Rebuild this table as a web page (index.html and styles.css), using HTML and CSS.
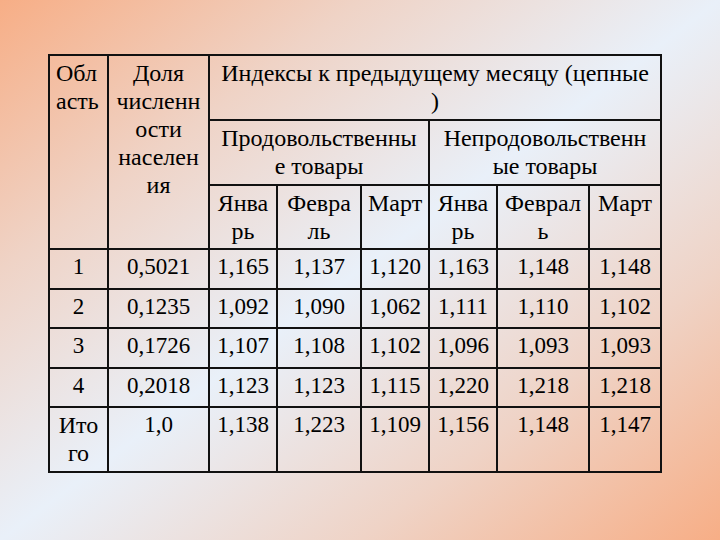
FILE: index.html
```html
<!DOCTYPE html>
<html lang="ru">
<head>
<meta charset="utf-8">
<title>Индексы</title>
<link rel="stylesheet" href="styles.css">
</head>
<body>
<table class="grid">
  <colgroup>
    <col class="c1"><col class="c2"><col class="c3"><col class="c4"><col class="c5"><col class="c6"><col class="c7"><col class="c8">
  </colgroup>
  <tr class="h1 head">
    <td rowspan="3" class="left">Обл<br>асть</td>
    <td rowspan="3">Доля<br>численн<br>ости<br>населен<br>ия</td>
    <td colspan="6">Индексы к предыдущему месяцу (цепные<br>)</td>
  </tr>
  <tr class="h2 head">
    <td colspan="3">Продовольственны<br>е товары</td>
    <td colspan="3">Непродовольственн<br>ые товары</td>
  </tr>
  <tr class="h3 head">
    <td>Янва<br>рь</td><td>Февра<br>ль</td><td>Март</td><td>Янва<br>рь</td><td>Феврал<br>ь</td><td>Март</td>
  </tr>
  <tr class="r40"><td>1</td><td>0,5021</td><td>1,165</td><td>1,137</td><td>1,120</td><td>1,163</td><td>1,148</td><td>1,148</td></tr>
  <tr class="r39"><td>2</td><td>0,1235</td><td>1,092</td><td>1,090</td><td>1,062</td><td>1,111</td><td>1,110</td><td>1,102</td></tr>
  <tr class="r40"><td>3</td><td>0,1726</td><td>1,107</td><td>1,108</td><td>1,102</td><td>1,096</td><td>1,093</td><td>1,093</td></tr>
  <tr class="r39"><td>4</td><td>0,2018</td><td>1,123</td><td>1,123</td><td>1,115</td><td>1,220</td><td>1,218</td><td>1,218</td></tr>
  <tr class="total"><td class="word">Ито<br>го</td><td>1,0</td><td>1,138</td><td>1,223</td><td>1,109</td><td>1,156</td><td>1,148</td><td>1,147</td></tr>
</table>
</body>
</html>
```
FILE: styles.css
```css
html, body {
  margin: 0;
  height: 100%;
}
body {
  width: 720px;
  height: 540px;
  box-sizing: border-box;
  padding: 54px 0 0 48px;
  background: linear-gradient(to bottom right, #f7ae86 0%, #efd3c6 25%, #e9f0f9 50%, #efd3c6 75%, #f7ae86 100%);
  font-family: "Liberation Serif", serif;
  color: #000;
  overflow: hidden;
}
.grid {
  border-collapse: collapse;
  table-layout: fixed;
  width: 613px;
  font-family: "Liberation Serif", serif;
  font-size: 23px;
  line-height: 28px;
}
.grid td {
  border: 2px solid #111;
  padding: 3px 6px 0;
  text-align: center;
  vertical-align: top;
  white-space: nowrap;
  overflow: hidden;
}
.grid .head td,
.grid td.word { font-size: 24px; }
.grid td.left { text-align: left; }
.c1 { width: 59px; }
.c2 { width: 101px; }
.c3 { width: 68px; }
.c4 { width: 84px; }
.c5 { width: 68px; }
.c6 { width: 68px; }
.c7 { width: 92px; }
.c8 { width: 72px; }
.h1 { height: 65px; }
.h2 { height: 65px; }
.h3 { height: 64px; }
.r40 { height: 40px; }
.r39 { height: 39px; }
.total { height: 65px; }
```
